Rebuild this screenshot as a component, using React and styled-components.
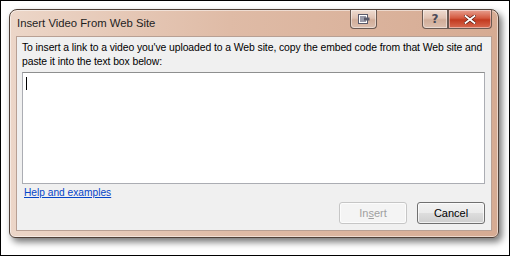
import React from 'react';
import styled, { createGlobalStyle } from 'styled-components';

const GlobalStyle = createGlobalStyle`
  html, body { margin: 0; padding: 0; background: #fff; }
  body { font-family: "Liberation Sans", Arial, sans-serif; }
`;

const Frame = styled.div`
  width: 510px;
  height: 256px;
  box-sizing: border-box;
  border: 1px solid #000;
  background: #fff;
  padding: 8px 0 0 8px;
`;

const Window = styled.div`
  width: 490px;
  height: 229px;
  box-sizing: border-box;
  border: 1px solid #4f4038;
  border-radius: 8px 8px 6px 6px;
  background: linear-gradient(90deg, #ecd6c8 0%, #dfbba6 45%, #d6ab93 100%);
  box-shadow: 3px 4px 7px rgba(0, 0, 0, 0.55), inset 0 0 0 1px rgba(255, 255, 255, 0.5);
  display: flex;
  flex-direction: column;
  padding: 0 6px 6px 6px;
`;

const TitleBar = styled.div`
  height: 26px;
  flex: none;
  display: flex;
  align-items: flex-start;
`;

const Title = styled.div`
  flex: 1;
  padding: 7px 0 0 1px;
  font-family: "Liberation Sans", Arial, sans-serif;
  font-size: 11.3px;
  color: #1e1e1e;
`;

const CaptionButton = styled.div`
  height: 19px;
  width: ${p => p.w}px;
  box-sizing: border-box;
  border: 1px solid #6b5a52;
  border-top: none;
  border-radius: ${p => p.r || '0 0 4px 4px'};
  background: ${p => p.red
    ? 'linear-gradient(180deg, #e8a090 0%, #d45a40 45%, #c23a20 55%, #d86a50 100%)'
    : 'linear-gradient(180deg, #efdcd0 0%, #e0c2b2 45%, #d1ad99 55%, #dcbfae 100%)'};
  box-shadow: inset 0 0 0 1px rgba(255, 255, 255, 0.45);
  display: flex;
  align-items: center;
  justify-content: center;
  margin-right: ${p => p.mr || 0}px;
  color: ${p => p.red ? '#fff' : '#4a4a58'};
  font-family: "DejaVu Sans", sans-serif;
  font-weight: bold;
  font-size: 12px;
`;

const Panel = styled.div`
  flex: 1;
  background: #f0f0f0;
  border: 1px solid #b8a094;
  display: flex;
  flex-direction: column;
  padding: 4px 6px 6px 5px;
`;

const Prompt = styled.div`
  font-family: "Liberation Sans", Arial, sans-serif;
  font-size: 10.4px;
  letter-spacing: -0.08px;
  line-height: 14px;
  white-space: nowrap;
  color: #000;
`;

const TextBox = styled.div`
  margin-top: 3px;
  height: 112px;
  flex: none;
  box-sizing: border-box;
  background: #fff;
  border: 1px solid #abadb3;
  border-top-color: #8e8f8f;
  padding: 4px 3px;
`;

const Caret = styled.div`
  width: 1px;
  height: 13px;
  background: #000;
`;

const HelpLink = styled.a`
  margin-top: 3px;
  margin-left: 2px;
  font-family: "Liberation Sans", Arial, sans-serif;
  font-size: 10.2px;
  color: #0645c8;
  text-decoration: underline;
  align-self: flex-start;
`;

const ButtonRow = styled.div`
  display: flex;
  justify-content: flex-end;
  gap: 10px;
  margin-top: auto;
`;

const Button = styled.div`
  width: 68px;
  height: 22px;
  box-sizing: border-box;
  border-radius: 3px;
  border: 1px solid ${p => p.disabled ? '#c6c6c6' : '#707070'};
  background: ${p => p.disabled
    ? '#f4f4f4'
    : 'linear-gradient(180deg, #f2f2f2 0%, #ebebeb 48%, #dddddd 52%, #cfcfcf 100%)'};
  box-shadow: inset 0 0 0 1px rgba(255, 255, 255, 0.7);
  color: ${p => p.disabled ? '#a0a0a0' : '#000'};
  font-family: "Liberation Sans", Arial, sans-serif;
  font-size: 11px;
  display: flex;
  align-items: center;
  justify-content: center;
`;

const RestoreIcon = () => (
  <svg width="12" height="10" viewBox="0 0 12 10">
    <rect x="0.5" y="0.5" width="9" height="9" fill="#fff" stroke="#5a5a6a" />
    <rect x="2" y="2" width="6" height="6" fill="#9a9aa8" />
    <rect x="6" y="3.5" width="5.5" height="3" fill="#5a5a6a" />
  </svg>
);

const CloseIcon = () => (
  <svg width="12" height="9" viewBox="0 0 12 9">
    <path d="M1.5 1 L10.5 8 M10.5 1 L1.5 8" stroke="#5a1a10" strokeWidth="3.2" strokeLinecap="square" />
    <path d="M1.5 1 L10.5 8 M10.5 1 L1.5 8" stroke="#fff" strokeWidth="1.8" strokeLinecap="square" />
  </svg>
);

export default function App() {
  return (
    <>
      <GlobalStyle />
      <Frame>
        <Window>
          <TitleBar>
            <Title>Insert Video From Web Site</Title>
            <CaptionButton w={27} mr={45}><RestoreIcon /></CaptionButton>
            <CaptionButton w={26} r="0 0 0 4px">?</CaptionButton>
            <CaptionButton w={44} red r="0 0 4px 0"><CloseIcon /></CaptionButton>
          </TitleBar>
          <Panel>
            <Prompt>
              To insert a link to a video you've uploaded to a Web site, copy the embed code from that Web site and
              <br />
              paste it into the text box below:
            </Prompt>
            <TextBox><Caret /></TextBox>
            <HelpLink href="#">Help and examples</HelpLink>
            <ButtonRow>
              <Button disabled>In<u>s</u>ert</Button>
              <Button>Cancel</Button>
            </ButtonRow>
          </Panel>
        </Window>
      </Frame>
    </>
  );
}
